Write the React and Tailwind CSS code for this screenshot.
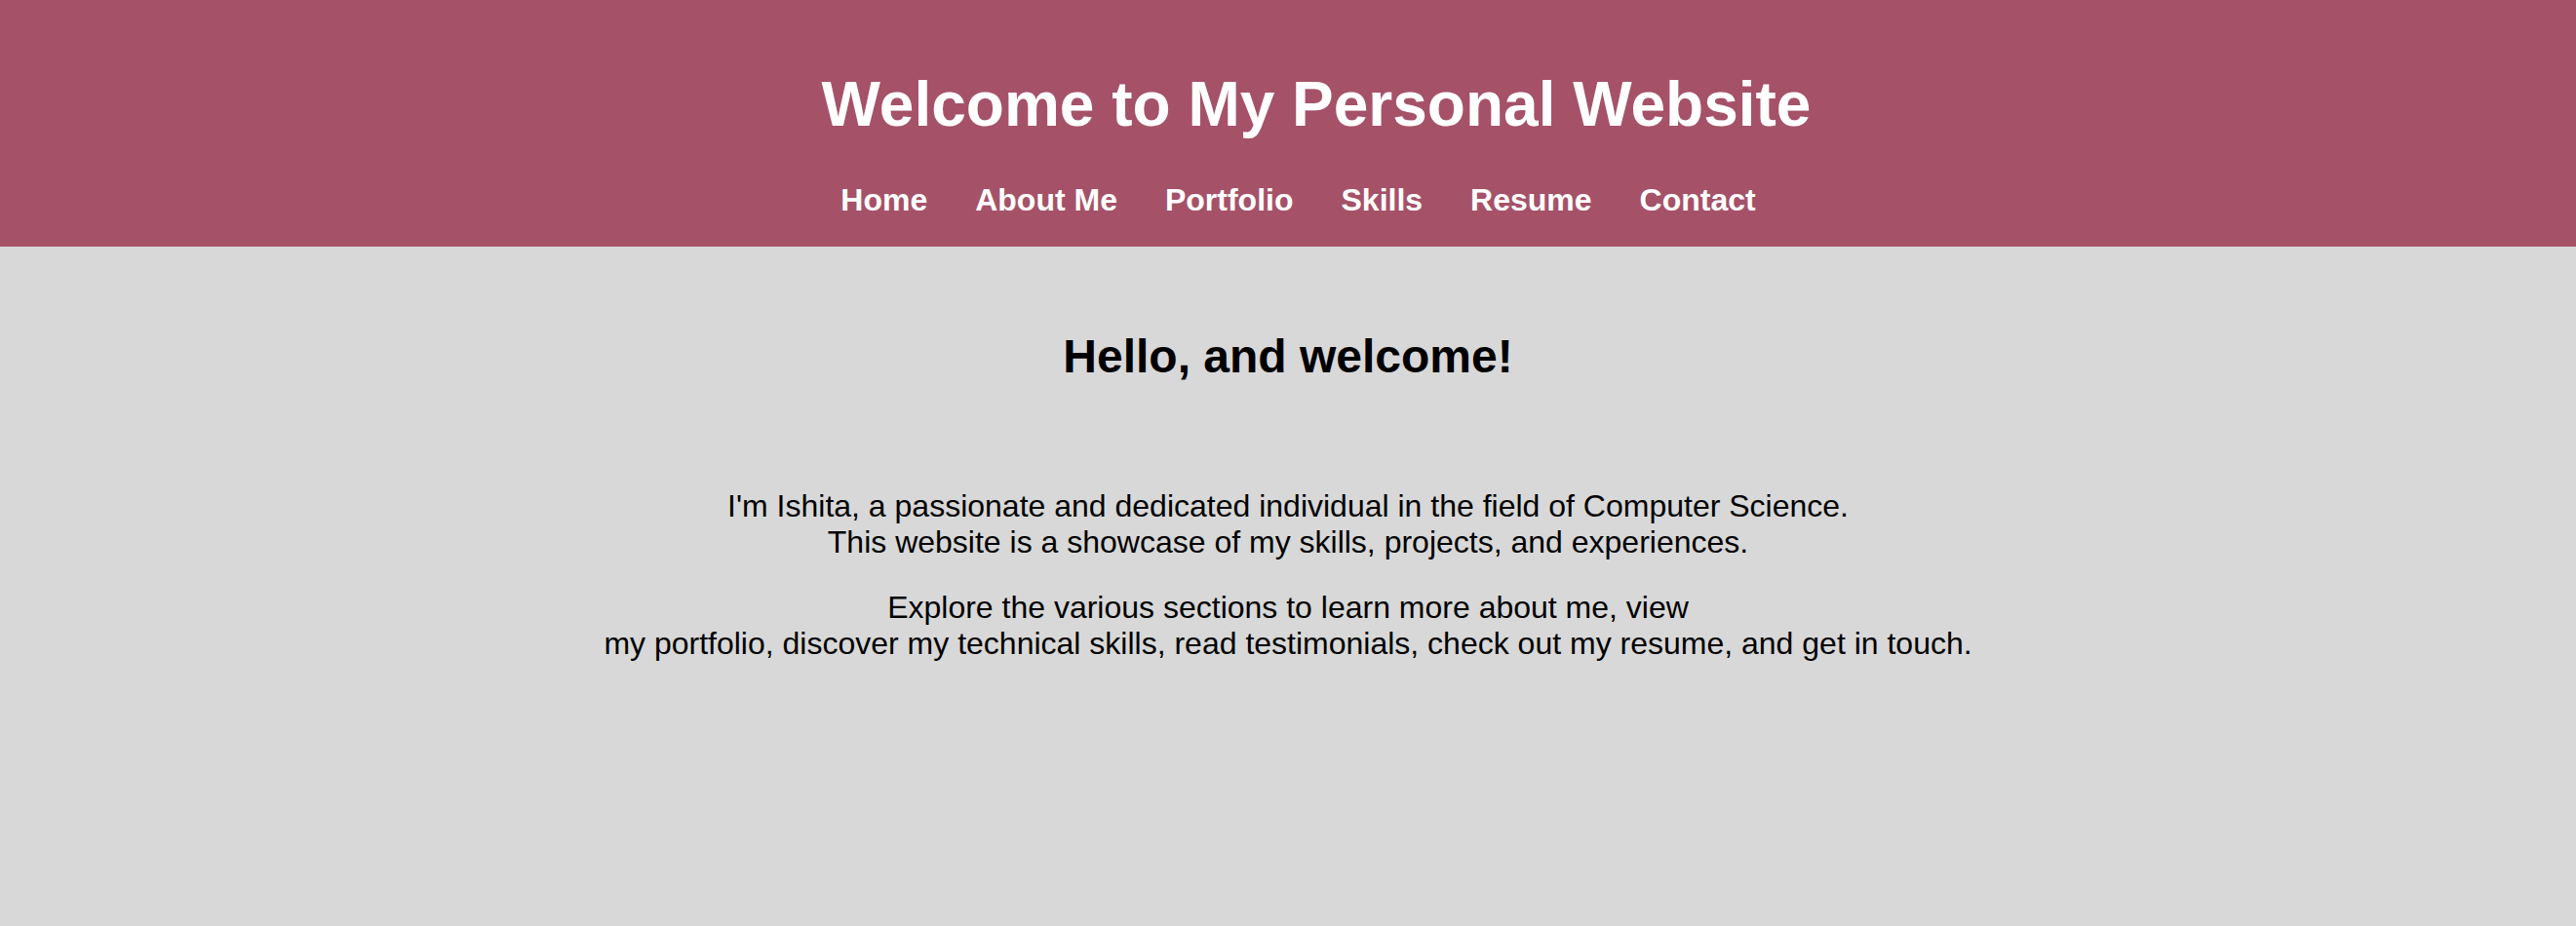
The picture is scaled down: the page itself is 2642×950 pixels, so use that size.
export default function App() {
  const links = ["Home", "About Me", "Portfolio", "Skills", "Resume", "Contact"];
  return (
    <div className="min-h-screen bg-[#d8d8d8] font-['Liberation_Sans',Arial,sans-serif] text-black">
      <header className="h-[253px] bg-[#a55269] text-white">
        <h1 className="pt-[70px] pl-[58px] text-center text-[64px] font-bold leading-[74px]">
          Welcome to My Personal Website
        </h1>
        <nav className="mt-[43px]">
          <ul className="flex justify-center gap-[49px] pl-[21px] text-[32px] font-bold leading-[37px]">
            {links.map((l) => (
              <li key={l}>
                <a href="#" className="text-white">{l}</a>
              </li>
            ))}
          </ul>
        </nav>
      </header>
      <main className="pt-[85px] text-center">
        <h2 className="text-[48px] font-bold leading-[55px]">Hello, and welcome!</h2>
        <p className="mt-[108px] text-[32px] leading-[37px]">
          I'm Ishita, a passionate and dedicated individual in the field of Computer Science.
          <br />
          This website is a showcase of my skills, projects, and experiences.
        </p>
        <p className="mt-[30px] text-[32px] leading-[37px]">
          Explore the various sections to learn more about me, view
          <br />
          my portfolio, discover my technical skills, read testimonials, check out my resume, and get in touch.
        </p>
      </main>
    </div>
  );
}
